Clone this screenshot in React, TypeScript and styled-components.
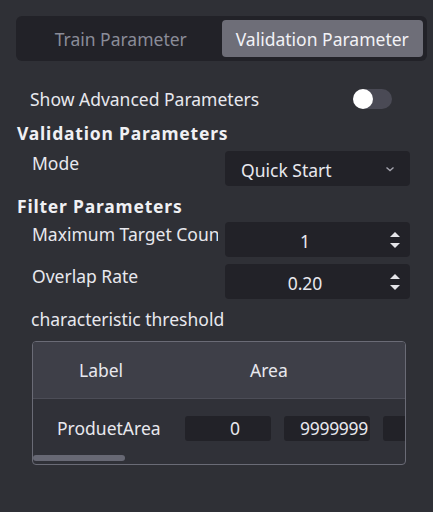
import React from "react";
import styled, { createGlobalStyle } from "styled-components";

const Global = createGlobalStyle`
  html, body { margin: 0; padding: 0; background: #2f3036; }
  body { font-family: "Noto Sans", "Open Sans", sans-serif; color: #e8e8ee; }
`;

const Page = styled.div`
  width: 433px;
  height: 512px;
  box-sizing: border-box;
  padding-top: 16px;
  background: #2f3036;
  overflow: hidden;
  font-size: 17.5px;
`;

const TabBar = styled.div`
  margin-left: 16px;
  width: 411px;
  height: 45px;
  box-sizing: border-box;
  padding: 4px;
  background: #222228;
  border-radius: 6px;
  display: flex;
`;

const Tab = styled.div<{ $active?: boolean }>`
  flex: 1;
  display: flex;
  align-items: center;
  justify-content: center;
  border-radius: 4px;
  padding-top: 1px;
  background: ${(p) => (p.$active ? "#6e6e78" : "transparent")};
  color: ${(p) => (p.$active ? "#f2f2f6" : "#8a8c98")};
`;

const ToggleRow = styled.div`
  margin-top: 28px;
  padding-left: 30px;
  width: 392px;
  box-sizing: border-box;
  display: flex;
  justify-content: space-between;
  align-items: center;
  height: 20px;
  line-height: 20px;
`;

const Switch = styled.div`
  width: 39px;
  height: 20px;
  border-radius: 10px;
  background: #4a4a55;
  position: relative;
`;

const Knob = styled.div`
  position: absolute;
  left: 0;
  top: 0;
  width: 20px;
  height: 20px;
  border-radius: 50%;
  background: #ffffff;
`;

const SectionTitle = styled.div<{ $mt: number }>`
  margin-top: ${(p) => p.$mt}px;
  padding-left: 17px;
  font-weight: 700;
  letter-spacing: 0.8px;
  height: 22px;
  line-height: 22px;
  color: #f0f0f4;
`;

const FieldRow = styled.div<{ $mt: number }>`
  margin-top: ${(p) => p.$mt}px;
  display: grid;
  grid-template-columns: 186px 185px;
  column-gap: 7px;
  padding-left: 32px;
  height: 35px;
`;

const FieldLabel = styled.div`
  line-height: 22px;
  margin-top: 1px;
  white-space: nowrap;
  overflow: hidden;
`;

const Box = styled.div<{ $center?: boolean }>`
  background: #222228;
  border-radius: 4px;
  height: 35px;
  display: flex;
  align-items: center;
  position: relative;
  justify-content: ${(p) => (p.$center ? "center" : "flex-start")};
  padding-left: ${(p) => (p.$center ? "0" : "16px")};
  padding-right: ${(p) => (p.$center ? "25px" : "0")};
  padding-top: 3px;
  box-sizing: border-box;
`;

const Chevron = styled.svg`
  position: absolute;
  right: 15px;
  top: 14px;
`;

const Spin = styled.svg`
  position: absolute;
  right: 8px;
  top: 9px;
`;

const Caption = styled.div`
  margin-top: 9px;
  padding-left: 31px;
  line-height: 22px;
`;

const TableFrame = styled.div`
  margin-top: 11px;
  margin-left: 32px;
  width: 374px;
  height: 124px;
  box-sizing: border-box;
  border: 1.5px solid #6a6b76;
  border-radius: 4px;
  overflow: hidden;
  position: relative;
  background: #303138;
`;

const HeaderRow = styled.div`
  height: 56px;
  background: #3e3f48;
  border-bottom: 1px solid #4c4d57;
  display: flex;
  align-items: center;
`;

const HeaderCell = styled.div<{ $w: number; $pl: number }>`
  width: ${(p) => p.$w}px;
  padding-left: ${(p) => p.$pl}px;
  box-sizing: border-box;
  flex-shrink: 0;
`;

const BodyRow = styled.div`
  display: flex;
  align-items: center;
  height: 58px;
`;

const Cell = styled.div`
  width: 152px;
  padding-left: 24px;
  box-sizing: border-box;
  flex-shrink: 0;
`;

const CellInput = styled.div<{ $w: number; $left?: boolean }>`
  width: ${(p) => p.$w}px;
  height: 25px;
  background: #222228;
  border-radius: 3px;
  margin-right: 13px;
  flex-shrink: 0;
  display: flex;
  align-items: center;
  box-sizing: border-box;
  overflow: hidden;
  white-space: nowrap;
  justify-content: ${(p) => (p.$left ? "flex-start" : "center")};
  padding-left: ${(p) => (p.$left ? "16px" : "14px")};
  letter-spacing: ${(p) => (p.$left ? "-0.3px" : "0")};
`;

const ScrollThumb = styled.div`
  position: absolute;
  left: 0;
  bottom: 3px;
  width: 92px;
  height: 6px;
  border-radius: 3px;
  background: #676874;
`;

const SpinIcon = () => (
  <Spin width="14" height="18" viewBox="0 0 14 18">
    <path d="M2 6 L7 1 L12 6 Z" fill="#e6e6ea" />
    <path d="M2 12 L7 17 L12 12 Z" fill="#e6e6ea" />
  </Spin>
);

export default function App() {
  return (
    <>
      <Global />
      <Page>
        <TabBar>
          <Tab>Train Parameter</Tab>
          <Tab $active>Validation Parameter</Tab>
        </TabBar>
        <ToggleRow>
          <span>Show Advanced Parameters</span>
          <Switch>
            <Knob />
          </Switch>
        </ToggleRow>
        <SectionTitle $mt={13}>Validation Parameters</SectionTitle>
        <FieldRow $mt={7}>
          <FieldLabel>Mode</FieldLabel>
          <Box>
            Quick Start
            <Chevron width="10" height="8" viewBox="0 0 10 8">
              <path d="M1.5 2.5 L5 5.5 L8.5 2.5" stroke="#a4a4ae" strokeWidth="1.4" fill="none" />
            </Chevron>
          </Box>
        </FieldRow>
        <SectionTitle $mt={9}>Filter Parameters</SectionTitle>
        <FieldRow $mt={5}>
          <FieldLabel>Maximum Target Count</FieldLabel>
          <Box $center>
            1
            <SpinIcon />
          </Box>
        </FieldRow>
        <FieldRow $mt={7}>
          <FieldLabel>Overlap Rate</FieldLabel>
          <Box $center>
            0.20
            <SpinIcon />
          </Box>
        </FieldRow>
        <Caption>characteristic threshold</Caption>
        <TableFrame>
          <HeaderRow>
            <HeaderCell $w={152} $pl={46}>Label</HeaderCell>
            <HeaderCell $w={200} $pl={65}>Area</HeaderCell>
          </HeaderRow>
          <BodyRow>
            <Cell>ProduetArea</Cell>
            <CellInput $w={86}>0</CellInput>
            <CellInput $w={86} $left>9999999</CellInput>
            <CellInput $w={86}></CellInput>
          </BodyRow>
          <ScrollThumb />
        </TableFrame>
      </Page>
    </>
  );
}
